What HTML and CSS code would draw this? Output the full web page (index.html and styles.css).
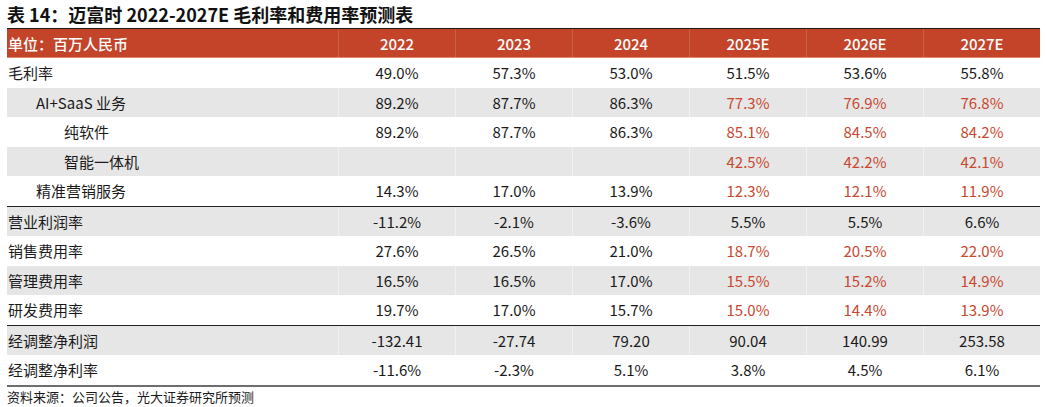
FILE: index.html
```html
<!DOCTYPE html>
<html lang="zh-CN">
<head>
<meta charset="utf-8">
<title>表 14</title>
<link rel="stylesheet" href="styles.css">
</head>
<body>
<div class="page">
  <h1 class="title">表 14：迈富时 2022-2027E 毛利率和费用率预测表</h1>
  <div class="table">
    <div class="row head">
      <div class="cell label">单位：百万人民币</div>
      <div class="cell">2022</div>
      <div class="cell">2023</div>
      <div class="cell">2024</div>
      <div class="cell">2025E</div>
      <div class="cell">2026E</div>
      <div class="cell">2027E</div>
    </div>
    <div class="row">
      <div class="cell label">毛利率</div>
      <div class="cell">49.0%</div><div class="cell">57.3%</div><div class="cell">53.0%</div>
      <div class="cell">51.5%</div><div class="cell">53.6%</div><div class="cell">55.8%</div>
    </div>
    <div class="row alt">
      <div class="cell label ind1">AI+SaaS 业务</div>
      <div class="cell">89.2%</div><div class="cell">87.7%</div><div class="cell">86.3%</div>
      <div class="cell est">77.3%</div><div class="cell est">76.9%</div><div class="cell est">76.8%</div>
    </div>
    <div class="row">
      <div class="cell label ind2">纯软件</div>
      <div class="cell">89.2%</div><div class="cell">87.7%</div><div class="cell">86.3%</div>
      <div class="cell est">85.1%</div><div class="cell est">84.5%</div><div class="cell est">84.2%</div>
    </div>
    <div class="row alt">
      <div class="cell label ind2">智能一体机</div>
      <div class="cell"></div><div class="cell"></div><div class="cell"></div>
      <div class="cell est">42.5%</div><div class="cell est">42.2%</div><div class="cell est">42.1%</div>
    </div>
    <div class="row">
      <div class="cell label ind1">精准营销服务</div>
      <div class="cell">14.3%</div><div class="cell">17.0%</div><div class="cell">13.9%</div>
      <div class="cell est">12.3%</div><div class="cell est">12.1%</div><div class="cell est">11.9%</div>
    </div>
    <div class="row alt sep">
      <div class="cell label">营业利润率</div>
      <div class="cell">-11.2%</div><div class="cell">-2.1%</div><div class="cell">-3.6%</div>
      <div class="cell">5.5%</div><div class="cell">5.5%</div><div class="cell">6.6%</div>
    </div>
    <div class="row">
      <div class="cell label">销售费用率</div>
      <div class="cell">27.6%</div><div class="cell">26.5%</div><div class="cell">21.0%</div>
      <div class="cell est">18.7%</div><div class="cell est">20.5%</div><div class="cell est">22.0%</div>
    </div>
    <div class="row alt">
      <div class="cell label">管理费用率</div>
      <div class="cell">16.5%</div><div class="cell">16.5%</div><div class="cell">17.0%</div>
      <div class="cell est">15.5%</div><div class="cell est">15.2%</div><div class="cell est">14.9%</div>
    </div>
    <div class="row">
      <div class="cell label">研发费用率</div>
      <div class="cell">19.7%</div><div class="cell">17.0%</div><div class="cell">15.7%</div>
      <div class="cell est">15.0%</div><div class="cell est">14.4%</div><div class="cell est">13.9%</div>
    </div>
    <div class="row alt sep">
      <div class="cell label">经调整净利润</div>
      <div class="cell">-132.41</div><div class="cell">-27.74</div><div class="cell">79.20</div>
      <div class="cell">90.04</div><div class="cell">140.99</div><div class="cell">253.58</div>
    </div>
    <div class="row last">
      <div class="cell label">经调整净利率</div>
      <div class="cell">-11.6%</div><div class="cell">-2.3%</div><div class="cell">5.1%</div>
      <div class="cell">3.8%</div><div class="cell">4.5%</div><div class="cell">6.1%</div>
    </div>
  </div>
  <p class="source">资料来源：公司公告，光大证券研究所预测</p>
</div>
</body>
</html>
```
FILE: styles.css
```css
html, body {
  margin: 0;
  padding: 0;
  background: #ffffff;
}
body {
  font-family: "Noto Sans CJK SC", "Noto Sans", sans-serif;
  color: #1a1a1a;
}
.page {
  padding: 0 7px;
  width: 1033px;
}
.title {
  margin: 1px 0 0 0;
  font-size: 18px;
  line-height: 27px;
  font-weight: 700;
  color: #111;
}
.table {
  border-top: 1px solid #1a1a1a;
  border-bottom: 2px solid #6e6e6e;
}
.row {
  display: grid;
  grid-template-columns: 331px repeat(6, 117px);
  height: 29.5px;
  font-size: 15px;
}
.row.alt {
  background: #e6e6e6;
}
.row.sep {
  border-top: 1px solid #222;
}
.row.head {
  height: 29px;
  background: #c4442a;
  color: #ffffff;
  font-weight: 500;
  box-shadow: inset 0 -1px 0 #e2876f;
}
.cell {
  display: flex;
  align-items: center;
  justify-content: center;
  line-height: 1;
  border-left: 1px solid rgba(255, 255, 255, 0.45);
}
.row.head .cell {
  border-left-color: rgba(255, 255, 255, 0.15);
}
.cell.label {
  justify-content: flex-start;
  padding-left: 1px;
  border-left: none;
}
.cell.ind1 {
  padding-left: 29px;
}
.cell.ind2 {
  padding-left: 57px;
}
.cell.est {
  color: #c9482f;
}
.source {
  margin: 0;
  font-size: 13px;
  line-height: 19px;
  color: #1a1a1a;
}
```
